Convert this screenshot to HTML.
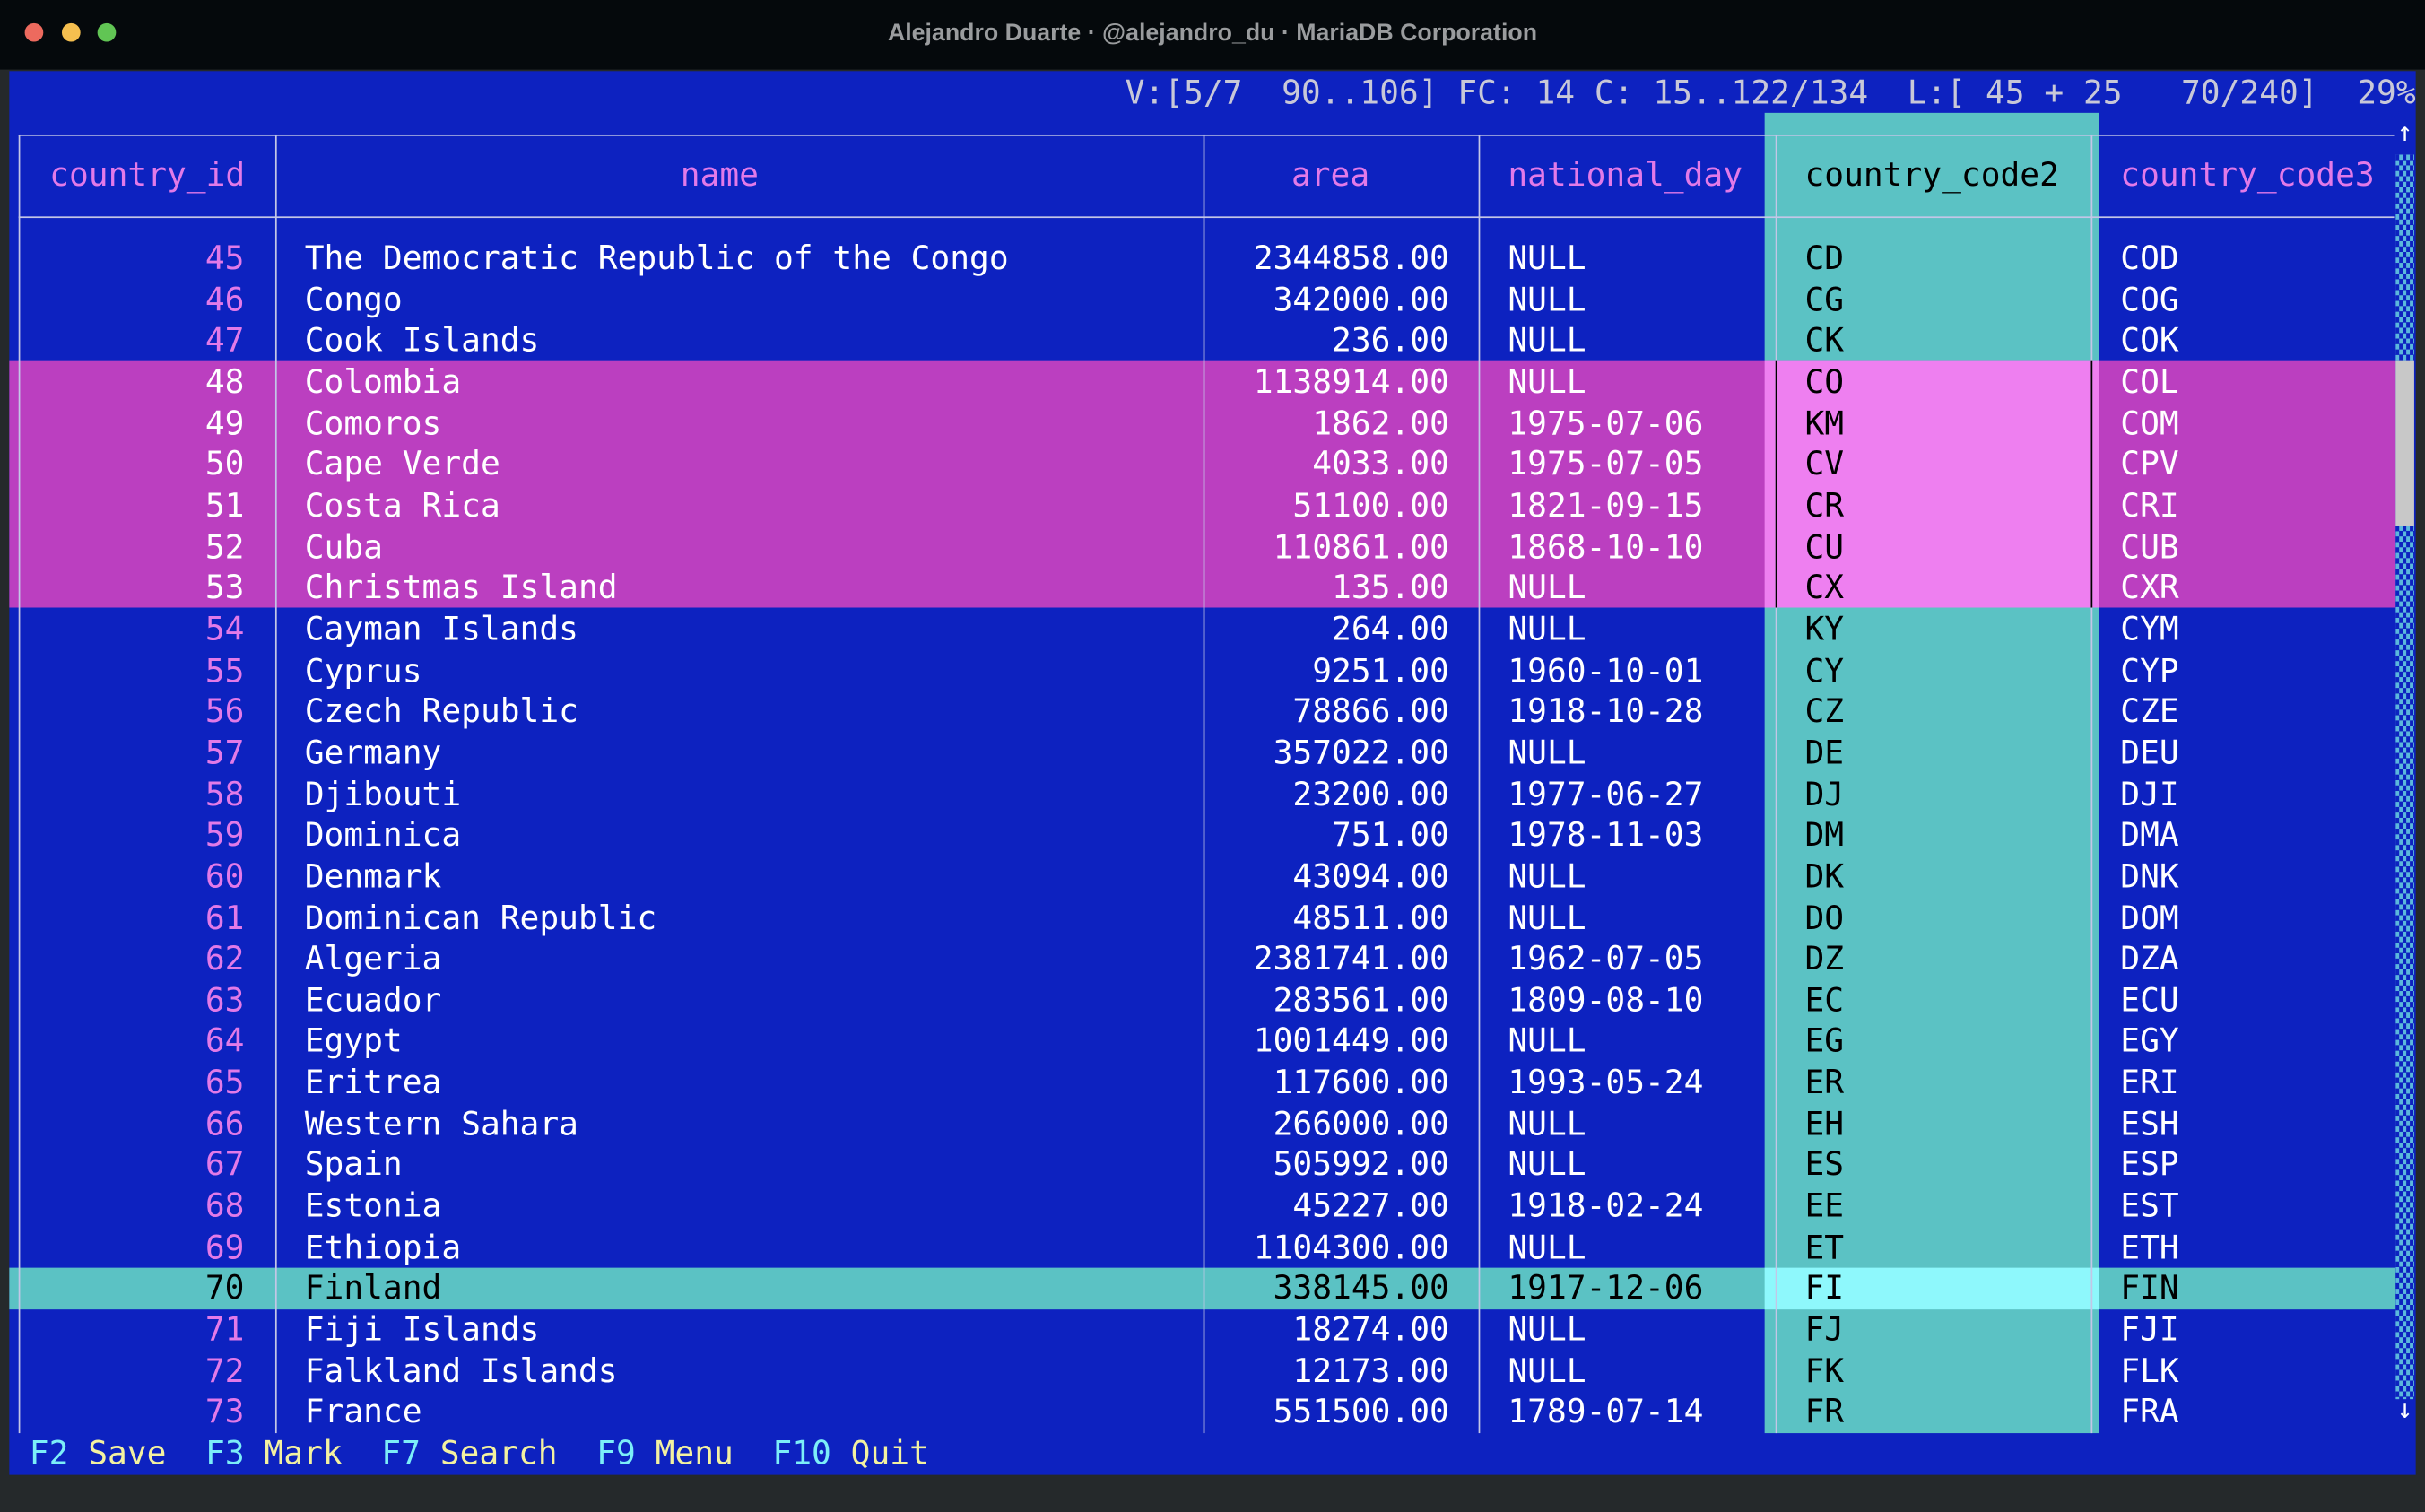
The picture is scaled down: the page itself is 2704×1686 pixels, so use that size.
<!DOCTYPE html>
<html><head><meta charset="utf-8"><style>
html,body{margin:0;padding:0;width:2704px;height:1686px;overflow:hidden;background:#25292b}
#s{position:absolute;left:0;top:0;width:1568px;height:978px;transform:scale(1.72449,1.72393);transform-origin:0 0;background:#25292b;font-family:"DejaVu Sans Mono","Liberation Mono",monospace;font-size:21px}
.abs{position:absolute}
#tb{left:0;top:0;width:1568px;height:45px;background:#05090c}
#title{left:0;top:0;width:1568px;height:44px;text-align:center;color:#9a9c9e;font:bold 15.5px "Liberation Sans",sans-serif;line-height:44px}
.dot{top:15px;width:12px;height:12px;border-radius:50%}
#blue{left:6px;top:46px;width:1556px;height:908px;background:#0d22c0}
#stat{right:6px;top:46px;height:28px;line-height:28px;color:#c8c8d8;white-space:pre}
.hl{height:1px;background:#c3c6e6}
.vl{width:1px;background:#c3c6e6}
#rows{left:0;top:154px;width:1568px}
.r{position:relative;height:26.67px;line-height:26.67px;white-space:pre;color:#fff}
.r span{position:absolute;top:0}
.i{left:0;width:158px;text-align:right;color:#e27ae8}
.n{left:197px}
.a{left:760px;width:177px;text-align:right}
.d{left:975px}
.c{left:1167px;color:#000}
.e{left:1371px}
.m .i{color:#fff}
.f span{color:#000}
.hd{left:0;top:100px;width:1568px;height:27px;line-height:27px}
.hd span{position:absolute;top:0;white-space:pre}
.sb{left:1549px;width:12px;background-color:#0d22c0;background-image:conic-gradient(#5bb8dc 25%,transparent 0 50%,#5bb8dc 0 75%,transparent 0);background-size:4.6px 7px}
.ar{left:1548px;width:14px;text-align:center;color:#fff;font-size:17px}
#foot{left:19px;top:927px;line-height:27px;white-space:pre;color:#f3f1a0}
#foot b{font-weight:normal;color:#7ceef8}
</style></head><body><div id="s">
<div class="abs" id="tb"></div>
<div class="abs" id="title">Alejandro Duarte · @alejandro_du · MariaDB Corporation</div>
<div class="abs dot" style="left:16px;background:#ed6a5e"></div>
<div class="abs dot" style="left:40px;background:#f5bf4f"></div>
<div class="abs dot" style="left:63px;background:#61c554"></div>
<div class="abs" id="blue"></div>
<div class="abs" style="left:1141px;top:73px;width:216px;height:854px;background:#5bc2c4"></div>
<div class="abs" style="left:6px;top:233px;width:1543px;height:160px;background:#bb3fc0"></div>
<div class="abs" style="left:1141px;top:233px;width:216px;height:160px;background:#ee7ff0"></div>
<div class="abs" style="left:6px;top:820px;width:1543px;height:27px;background:#5bc2c4"></div>
<div class="abs" style="left:1141px;top:820px;width:216px;height:27px;background:#8ef8fc"></div>
<div class="abs" id="stat">V:[5/7  90..106] FC: 14 C: 15..122/134  L:[ 45 + 25   70/240]  29%</div>
<div class="abs hl" style="left:12px;top:87px;width:1536px"></div>
<div class="abs hl" style="left:12px;top:140px;width:1536px"></div>
<div class="abs vl" style="left:12px;top:87px;height:840px"></div>
<div class="abs vl" style="left:178px;top:87px;height:840px"></div>
<div class="abs vl" style="left:778px;top:87px;height:840px"></div>
<div class="abs vl" style="left:956px;top:87px;height:840px"></div>
<div class="abs vl" style="left:1148px;top:87px;height:840px"></div>
<div class="abs vl" style="left:1352px;top:87px;height:840px"></div>
<div class="abs" style="left:1148px;top:233px;width:1px;height:160px;background:#000"></div>
<div class="abs" style="left:1352px;top:233px;width:1px;height:160px;background:#000"></div>
<div class="abs hd"><span style="left:32px;color:#e27ae8">country_id</span><span style="left:440px;color:#e27ae8">name</span><span style="left:835px;color:#e27ae8">area</span><span style="left:975px;color:#e27ae8">national_day</span><span style="left:1167px;color:#000">country_code2</span><span style="left:1371px;color:#e27ae8">country_code3</span></div>
<div class="abs sb" style="top:100px;height:133px"></div>
<div class="abs" style="left:1549px;top:233px;width:12px;height:107px;background:#c8c8c8"></div>
<div class="abs sb" style="top:340px;height:565px"></div>
<div class="abs ar" style="top:76px">↑</div>
<div class="abs ar" style="top:902px">↓</div>
<div class="abs" id="rows">
<div class="r"><span class="i">45</span><span class="n">The Democratic Republic of the Congo</span><span class="a">2344858.00</span><span class="d">NULL</span><span class="c">CD</span><span class="e">COD</span></div>
<div class="r"><span class="i">46</span><span class="n">Congo</span><span class="a">342000.00</span><span class="d">NULL</span><span class="c">CG</span><span class="e">COG</span></div>
<div class="r"><span class="i">47</span><span class="n">Cook Islands</span><span class="a">236.00</span><span class="d">NULL</span><span class="c">CK</span><span class="e">COK</span></div>
<div class="r m"><span class="i">48</span><span class="n">Colombia</span><span class="a">1138914.00</span><span class="d">NULL</span><span class="c">CO</span><span class="e">COL</span></div>
<div class="r m"><span class="i">49</span><span class="n">Comoros</span><span class="a">1862.00</span><span class="d">1975-07-06</span><span class="c">KM</span><span class="e">COM</span></div>
<div class="r m"><span class="i">50</span><span class="n">Cape Verde</span><span class="a">4033.00</span><span class="d">1975-07-05</span><span class="c">CV</span><span class="e">CPV</span></div>
<div class="r m"><span class="i">51</span><span class="n">Costa Rica</span><span class="a">51100.00</span><span class="d">1821-09-15</span><span class="c">CR</span><span class="e">CRI</span></div>
<div class="r m"><span class="i">52</span><span class="n">Cuba</span><span class="a">110861.00</span><span class="d">1868-10-10</span><span class="c">CU</span><span class="e">CUB</span></div>
<div class="r m"><span class="i">53</span><span class="n">Christmas Island</span><span class="a">135.00</span><span class="d">NULL</span><span class="c">CX</span><span class="e">CXR</span></div>
<div class="r"><span class="i">54</span><span class="n">Cayman Islands</span><span class="a">264.00</span><span class="d">NULL</span><span class="c">KY</span><span class="e">CYM</span></div>
<div class="r"><span class="i">55</span><span class="n">Cyprus</span><span class="a">9251.00</span><span class="d">1960-10-01</span><span class="c">CY</span><span class="e">CYP</span></div>
<div class="r"><span class="i">56</span><span class="n">Czech Republic</span><span class="a">78866.00</span><span class="d">1918-10-28</span><span class="c">CZ</span><span class="e">CZE</span></div>
<div class="r"><span class="i">57</span><span class="n">Germany</span><span class="a">357022.00</span><span class="d">NULL</span><span class="c">DE</span><span class="e">DEU</span></div>
<div class="r"><span class="i">58</span><span class="n">Djibouti</span><span class="a">23200.00</span><span class="d">1977-06-27</span><span class="c">DJ</span><span class="e">DJI</span></div>
<div class="r"><span class="i">59</span><span class="n">Dominica</span><span class="a">751.00</span><span class="d">1978-11-03</span><span class="c">DM</span><span class="e">DMA</span></div>
<div class="r"><span class="i">60</span><span class="n">Denmark</span><span class="a">43094.00</span><span class="d">NULL</span><span class="c">DK</span><span class="e">DNK</span></div>
<div class="r"><span class="i">61</span><span class="n">Dominican Republic</span><span class="a">48511.00</span><span class="d">NULL</span><span class="c">DO</span><span class="e">DOM</span></div>
<div class="r"><span class="i">62</span><span class="n">Algeria</span><span class="a">2381741.00</span><span class="d">1962-07-05</span><span class="c">DZ</span><span class="e">DZA</span></div>
<div class="r"><span class="i">63</span><span class="n">Ecuador</span><span class="a">283561.00</span><span class="d">1809-08-10</span><span class="c">EC</span><span class="e">ECU</span></div>
<div class="r"><span class="i">64</span><span class="n">Egypt</span><span class="a">1001449.00</span><span class="d">NULL</span><span class="c">EG</span><span class="e">EGY</span></div>
<div class="r"><span class="i">65</span><span class="n">Eritrea</span><span class="a">117600.00</span><span class="d">1993-05-24</span><span class="c">ER</span><span class="e">ERI</span></div>
<div class="r"><span class="i">66</span><span class="n">Western Sahara</span><span class="a">266000.00</span><span class="d">NULL</span><span class="c">EH</span><span class="e">ESH</span></div>
<div class="r"><span class="i">67</span><span class="n">Spain</span><span class="a">505992.00</span><span class="d">NULL</span><span class="c">ES</span><span class="e">ESP</span></div>
<div class="r"><span class="i">68</span><span class="n">Estonia</span><span class="a">45227.00</span><span class="d">1918-02-24</span><span class="c">EE</span><span class="e">EST</span></div>
<div class="r"><span class="i">69</span><span class="n">Ethiopia</span><span class="a">1104300.00</span><span class="d">NULL</span><span class="c">ET</span><span class="e">ETH</span></div>
<div class="r f"><span class="i">70</span><span class="n">Finland</span><span class="a">338145.00</span><span class="d">1917-12-06</span><span class="c">FI</span><span class="e">FIN</span></div>
<div class="r"><span class="i">71</span><span class="n">Fiji Islands</span><span class="a">18274.00</span><span class="d">NULL</span><span class="c">FJ</span><span class="e">FJI</span></div>
<div class="r"><span class="i">72</span><span class="n">Falkland Islands</span><span class="a">12173.00</span><span class="d">NULL</span><span class="c">FK</span><span class="e">FLK</span></div>
<div class="r"><span class="i">73</span><span class="n">France</span><span class="a">551500.00</span><span class="d">1789-07-14</span><span class="c">FR</span><span class="e">FRA</span></div>
</div>
<div class="abs" id="foot"><b>F2</b> Save  <b>F3</b> Mark  <b>F7</b> Search  <b>F9</b> Menu  <b>F10</b> Quit</div>
</div></body></html>
